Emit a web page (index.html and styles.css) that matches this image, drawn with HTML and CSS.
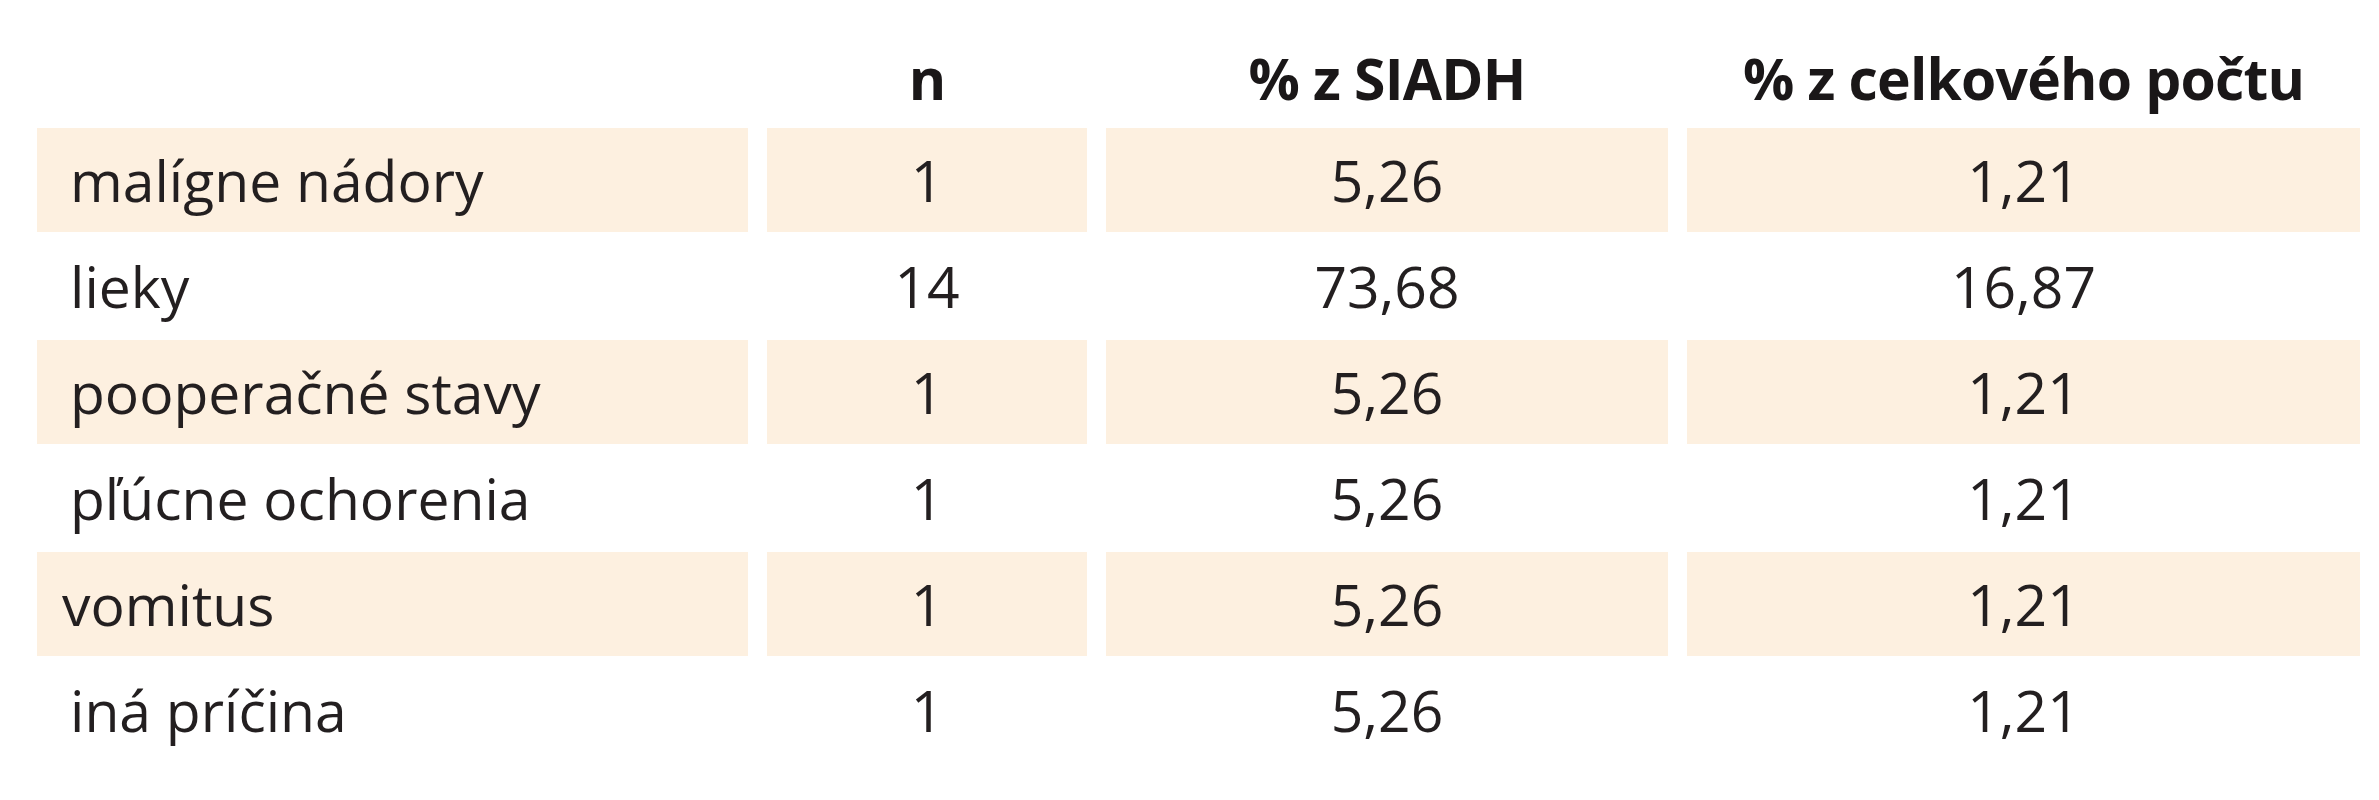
FILE: index.html
```html
<!DOCTYPE html>
<html lang="sk">
<head>
<meta charset="utf-8">
<title>SIADH</title>
<link rel="stylesheet" href="styles.css">
</head>
<body>
<table class="data">
  <colgroup>
    <col class="c-label">
    <col class="c-n">
    <col class="c-siadh">
    <col class="c-total">
  </colgroup>
  <thead>
    <tr>
      <th class="label"></th>
      <th>n</th>
      <th>% z SIADH</th>
      <th>% z celkového počtu</th>
    </tr>
  </thead>
  <tbody>
    <tr class="shaded">
      <td class="label">malígne nádory</td><td>1</td><td>5,26</td><td>1,21</td>
    </tr>
    <tr>
      <td class="label">lieky</td><td>14</td><td>73,68</td><td>16,87</td>
    </tr>
    <tr class="shaded">
      <td class="label">pooperačné stavy</td><td>1</td><td>5,26</td><td>1,21</td>
    </tr>
    <tr>
      <td class="label">pľúcne ochorenia</td><td>1</td><td>5,26</td><td>1,21</td>
    </tr>
    <tr class="shaded">
      <td class="label label-tight">vomitus</td><td>1</td><td>5,26</td><td>1,21</td>
    </tr>
    <tr>
      <td class="label">iná príčina</td><td>1</td><td>5,26</td><td>1,21</td>
    </tr>
  </tbody>
</table>
</body>
</html>
```
FILE: styles.css
```css
html, body {
  margin: 0;
  padding: 0;
  background: #ffffff;
}

body {
  font-family: "Open Sans", "Noto Sans", sans-serif;
  color: #231f20;
}

.data {
  table-layout: fixed;
  border-collapse: separate;
  border-spacing: 19px 2px;
  margin: 0 0 0 18px;
  width: 2361px;
  font-size: 57px;
  line-height: 68px;
}

.c-label { width: 711px; }
.c-n { width: 320px; }
.c-siadh { width: 562px; }
.c-total { width: 673px; }

.data th,
.data td {
  padding: 0;
  text-align: center;
  white-space: nowrap;
}

.data th {
  height: 124px;
  vertical-align: bottom;
  padding-bottom: 14px;
  box-sizing: border-box;
  font-weight: 700;
  letter-spacing: -0.8px;
  color: #1a1718;
}

.data td {
  height: 104px;
  vertical-align: middle;
  font-weight: 400;
}

.data .label {
  text-align: left;
  padding-left: 33px;
}

.data .label-tight {
  padding-left: 25px;
}

.shaded td {
  background: #fdf0e0;
}
```
